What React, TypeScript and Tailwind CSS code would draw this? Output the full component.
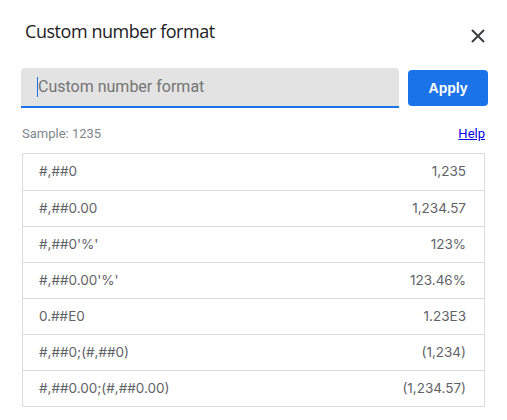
import React from 'react';

const formats: [string, string][] = [
  ['#,##0', '1,235'],
  ['#,##0.00', '1,234.57'],
  ["#,##0'%'", '123%'],
  ["#,##0.00'%'", '123.46%'],
  ['0.##E0', '1.23E3'],
  ['#,##0;(#,##0)', '(1,234)'],
  ['#,##0.00;(#,##0.00)', '(1,234.57)'],
];

const App: React.FC = () => {
  return (
    <div className="w-[507px] h-[420px] bg-white font-['Roboto',sans-serif] overflow-hidden">
      <div className="flex items-center justify-between pl-[25px] pr-[21px] pt-[18px]">
        <h1 className="text-[18px] leading-[26px] text-[#202124] font-['Open_Sans',sans-serif] tracking-[-0.45px]">
          Custom number format
        </h1>
        <svg width="16" height="16" viewBox="0 0 16 16" className="mt-[10px]">
          <path d="M2 2L14 14M14 2L2 14" stroke="#3c4043" strokeWidth="2" />
        </svg>
      </div>

      <div className="flex items-center gap-[9px] pl-[21px] pr-[19px] mt-[24px]">
        <div className="flex-1 h-[40px] bg-[#e3e3e3] rounded-t-[4px] border-b-2 border-[#1a73e8] flex items-center pl-[16px]">
          <span className="w-px h-[20px] bg-[#1a73e8]"></span>
          <span className="text-[16px] text-[#757575]">Custom number format</span>
        </div>
        <button className="w-[80px] h-[36px] bg-[#1a73e8] text-white text-[14px] font-bold rounded-[4px] font-['Liberation_Sans',sans-serif]">
          Apply
        </button>
      </div>

      <div className="flex items-center justify-between px-[21px] mt-[16px] text-[13px]">
        <span className="text-[#80868b] pl-px">Sample: 1235</span>
        <a className="text-[#0000ee] underline pr-px">Help</a>
      </div>

      <div className="mx-[22px] mt-[9px] border border-[#dadce0]">
        {formats.map(([fmt, val], i) => (
          <div
            key={i}
            className={`flex items-center justify-between h-[36px] pl-[16px] pr-[18px] text-[13.5px] text-[#5f6368] font-['Inter',sans-serif] ${i > 0 ? 'border-t border-[#dadce0]' : ''}`}
          >
            <span>{fmt}</span>
            <span>{val}</span>
          </div>
        ))}
      </div>
    </div>
  );
};

export default App;
